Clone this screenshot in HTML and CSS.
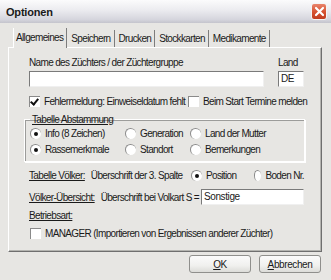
FILE: index.html
```html
<!DOCTYPE html>
<html lang="de">
<head>
    <meta charset="UTF-8">
    <link rel="stylesheet" href="styles.css">
</head>
<body>
<div class="window">
    <div class="titlebar">
        <span class="title">Optionen</span>
        <span class="close">
            <svg width="11" height="11" viewBox="0 0 11 11"><path d="M2 2 L9 9 M9 2 L2 9" stroke="#fff" stroke-width="2.2" stroke-linecap="round"/></svg>
        </span>
    </div>

    <div class="tabs">
        <span class="tab active">Allgemeines</span>
        <span class="tab">Speichern</span>
        <span class="tab">Drucken</span>
        <span class="tab">Stockkarten</span>
        <span class="tab">Medikamente</span>
    </div>

    <div class="panel">
        <div class="name-row">
            <div class="field name-field">
                <label>Name des Züchters / der Züchtergruppe</label>
                <div class="input"></div>
            </div>
            <div class="field land-field">
                <label>Land</label>
                <div class="input">DE</div>
            </div>
        </div>

        <div class="check-row">
            <span class="opt check-a"><span class="box checked"></span>Fehlermeldung: Einweiseldatum fehlt</span>
            <span class="opt"><span class="box"></span>Beim Start Termine melden</span>
        </div>

        <fieldset class="group">
            <legend><u>Tabelle Abstammung</u></legend>
            <div class="radio-grid">
                <span class="opt"><span class="radio on"></span>Info (8 Zeichen)</span>
                <span class="opt"><span class="radio"></span>Generation</span>
                <span class="opt"><span class="radio"></span>Land der Mutter</span>
                <span class="opt"><span class="radio on"></span>Rassemerkmale</span>
                <span class="opt"><span class="radio"></span>Standort</span>
                <span class="opt"><span class="radio"></span>Bemerkungen</span>
            </div>
        </fieldset>

        <div class="line-row first-line">
            <u class="caption">Tabelle Völker:</u>
            <span class="desc">Überschrift der 3. Spalte</span>
            <span class="opt pos"><span class="radio on"></span>Position</span>
            <span class="opt boden"><span class="radio"></span>Boden Nr.</span>
        </div>

        <div class="line-row">
            <u class="caption">Völker-Übersicht:</u>
            <span class="desc">Überschrift bei Volkart S =</span>
            <div class="input sonst">Sonstige</div>
        </div>

        <div class="betrieb"><u>Betriebsart:</u></div>
        <div class="opt manager"><span class="box"></span>MANAGER (Importieren von Ergebnissen anderer Züchter)</div>
    </div>

    <div class="buttons">
        <button><u>O</u>K</button>
        <button><u>A</u>bbrechen</button>
    </div>
</div>
</body>
</html>
```

FILE: styles.css
```css
body {
    margin: 0;
    padding: 0;
    background-color: #e7e6e3;
    font-family: 'Liberation Sans', Arial, sans-serif;
    font-size: 10px;
    letter-spacing: -0.65px;
    color: #1a1a1a;
    white-space: nowrap;
}

.window {
    width: 331px;
    height: 280px;
    overflow: hidden;
    display: flex;
    flex-direction: column;
}

.titlebar {
    height: 23px;
    display: flex;
    align-items: center;
    justify-content: space-between;
    padding: 0 4px 0 6px;
    background: linear-gradient(#fbfbfc, #ebebef 45%, #d5d5dd 85%, #c4c4cc);
}

.title {
    font-weight: bold;
    font-size: 11px;
    letter-spacing: -0.2px;
    color: #1a1a1a;
}

.close {
    width: 16px;
    height: 17px;
    box-sizing: border-box;
    border: 1px solid #f4f4f4;
    border-radius: 3px;
    background: linear-gradient(#e8846c, #d6502e 55%, #c03d20);
    display: flex;
    align-items: center;
    justify-content: center;
}

.tabs {
    display: flex;
    align-items: flex-end;
    height: 21px;
    margin-top: 3px;
    padding-left: 13px;
}

.tab {
    height: 17px;
    line-height: 17px;
    padding: 0 3px 0 4px;
    border-right: 1px solid #7d7d7d;
}

.tab.active {
    height: 20px;
    line-height: 19px;
    padding: 0 3px 0 2px;
    border-left: 1px solid #ffffff;
    background-color: #e7e6e3;
    position: relative;
    top: 1px;
}

.panel {
    height: 205px;
    margin: 0 9px 0 8px;
    box-sizing: border-box;
    border-top: 1px solid #ffffff;
    border-left: 1px solid #ffffff;
    border-right: 1px solid #6f6f6f;
    border-bottom: 1px solid #6f6f6f;
    box-shadow: inset -1px -1px 0 #b4b4b0;
    padding: 8px 0 0 20px;
}

.name-row {
    display: flex;
    gap: 14px;
}

.field label {
    display: block;
    height: 13px;
    line-height: 13px;
    margin-bottom: 2px;
}

.input {
    height: 16px;
    box-sizing: border-box;
    background-color: #ffffff;
    border-top: 1px solid #7a7a7a;
    border-left: 1px solid #7a7a7a;
    border-right: 1px solid #f0f0f0;
    border-bottom: 1px solid #f0f0f0;
    line-height: 14px;
    padding-left: 2px;
    letter-spacing: -0.4px;
}

.name-field .input {
    width: 235px;
}

.land-field .input {
    width: 26px;
}

.opt {
    display: flex;
    align-items: center;
    height: 13px;
}

.box {
    width: 11px;
    height: 11px;
    box-sizing: border-box;
    background-color: #ffffff;
    border-top: 1px solid #8a8a8a;
    border-left: 1px solid #8a8a8a;
    margin-right: 4px;
    position: relative;
}

.box.checked::after {
    content: '';
    position: absolute;
    left: 2px;
    top: 0px;
    width: 3px;
    height: 6px;
    border-right: 2px solid #111;
    border-bottom: 2px solid #111;
    transform: rotate(40deg);
}

.radio {
    width: 11px;
    height: 11px;
    box-sizing: border-box;
    border-radius: 50%;
    background-color: #ffffff;
    border-top: 1px solid #8a8a8a;
    border-left: 1px solid #8a8a8a;
    margin-right: 4px;
    position: relative;
}

.radio.on::after {
    content: '';
    position: absolute;
    left: 3px;
    top: 3px;
    width: 4px;
    height: 4px;
    border-radius: 50%;
    background-color: #111;
}

.check-row {
    display: flex;
    margin-top: 8px;
}

.check-a {
    width: 159px;
}

.group {
    margin: 6px 0 0 -5px;
    width: 281px;
    box-sizing: border-box;
    border: 1px solid #ffffff;
    box-shadow: inset 1px 1px 0 #9c9c9a, 1px 1px 0 #ffffff;
    padding: 2px 0 5px 5px;
    min-inline-size: 0;
}

.group legend {
    padding: 0 2px;
    margin-left: 0;
    line-height: 11px;
}

.radio-grid {
    display: grid;
    grid-template-columns: 95px 65px auto;
    row-gap: 3px;
}

.line-row {
    display: flex;
    align-items: center;
    height: 16px;
    width: 275px;
    margin-top: 6px;
}

.first-line {
    margin-top: 5px;
}

.caption {
    margin-right: 6px;
}

.desc {
    flex: 1;
}

.pos {
    width: 63px;
}

.boden {
    width: 50px;
}

.sonst {
    width: 103px;
}

.betrieb {
    margin-top: 4px;
    height: 13px;
    line-height: 13px;
}

.manager {
    margin-top: 5px;
    padding-left: 1px;
}

.buttons {
    display: flex;
    justify-content: flex-end;
    gap: 8px;
    padding: 3px 10px 0 0;
}

button {
    width: 62px;
    height: 18px;
    font-family: 'Liberation Sans', Arial, sans-serif;
    font-size: 10px;
    letter-spacing: -0.4px;
    color: #1a1a1a;
    background: linear-gradient(#fbfbfb, #f0f0ee 60%, #dcdcd8);
    border: 1px solid #8f8f8c;
    border-radius: 3px;
    padding: 0;
}
```
